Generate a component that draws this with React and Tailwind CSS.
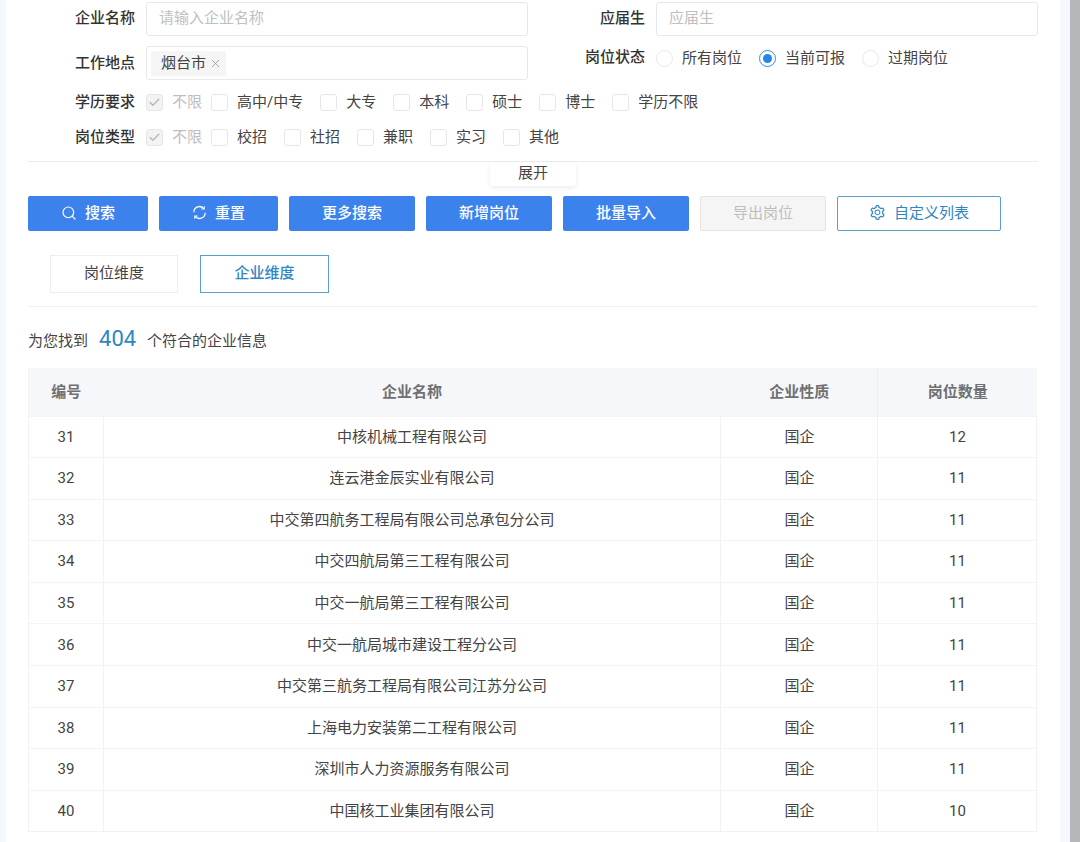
import React from "react";
import { Search, Check, X } from "lucide-react";
import { AiOutlineSetting } from "react-icons/ai";

function SyncIcon() {
  return (
    <svg width="15" height="15" viewBox="0 0 16 16" fill="none" stroke="currentColor" strokeWidth="1.4" strokeLinecap="round">
      <path d="M2 7.2A6 6 0 0 1 12.4 3.6" />
      <path d="M14 8.8A6 6 0 0 1 3.6 12.4" />
      <path d="M13 1.6v2.6h-2.6" strokeWidth="1.1" />
      <path d="M3 14.4v-2.6h2.6" strokeWidth="1.1" />
    </svg>
  );
}

function Box({ checked, disabled }) {
  return (
    <span className={`flex h-[17px] w-[17px] shrink-0 items-center justify-center rounded-[3px] border border-[#e4e6ea] ${disabled ? "bg-[#f3f3f3]" : "bg-white"}`}>
      {checked && <Check size={13} strokeWidth={2.6} className="text-[#b8b8b8]" />}
    </span>
  );
}

function CheckItem({ label, checked, disabled, className = "" }) {
  return (
    <span className={`flex items-center gap-[9px] ${className}`}>
      <Box checked={checked} disabled={disabled} />
      <span className={disabled ? "text-[#bdbdbd]" : "text-[#444]"}>{label}</span>
    </span>
  );
}

function Radio({ label, on }) {
  return (
    <span className="flex items-center gap-[9px]">
      <span className={`flex h-[17px] w-[17px] items-center justify-center rounded-full border ${on ? "border-[#2f8fe8]" : "border-[#e6e8ec]"}`}>
        {on && <span className="h-[9px] w-[9px] rounded-full bg-[#2486e8]" />}
      </span>
      <span className="text-[#444]">{label}</span>
    </span>
  );
}

function Label({ children, className = "pb-px" }) {
  return <span className={`w-[107px] shrink-0 text-right font-medium text-[#333] ${className}`}>{children}</span>;
}

function Btn({ children, w, kind = "primary" }) {
  const styles = {
    primary: "bg-[#3b82ec] text-white font-medium",
    disabled: "border border-[#e4e4e4] bg-[#f5f5f5] text-[#bdbdbd]",
    outline: "border border-[#5a9fcb] bg-white text-[#2f86c4]",
  };
  return (
    <button className={`flex h-[35px] items-center justify-center gap-[8px] rounded-[2px] pb-[2px] ${w} ${styles[kind]}`}>
      {children}
    </button>
  );
}

const rows = [
  ["31", "中核机械工程有限公司", "12"],
  ["32", "连云港金辰实业有限公司", "11"],
  ["33", "中交第四航务工程局有限公司总承包分公司", "11"],
  ["34", "中交四航局第三工程有限公司", "11"],
  ["35", "中交一航局第三工程有限公司", "11"],
  ["36", "中交一航局城市建设工程分公司", "11"],
  ["37", "中交第三航务工程局有限公司江苏分公司", "11"],
  ["38", "上海电力安装第二工程有限公司", "11"],
  ["39", "深圳市人力资源服务有限公司", "11"],
  ["40", "中国核工业集团有限公司", "10"],
];

export default function App() {
  return (
    <div className="flex h-[842px] w-[1080px] overflow-hidden bg-[#f4f8ff] pl-[6px] font-['Roboto','Noto_Sans_CJK_SC',sans-serif] text-[15px] leading-[20px] text-[#444]">
      <main className="flex w-[1054px] flex-col bg-white pl-[22px] pr-[22px] pt-[2px]">
        <div className="grid grid-cols-[500px_500px] gap-x-[10px] gap-y-[10px]">
          <div className="flex items-center gap-[11px]">
            <Label className="pb-[3px]">企业名称</Label>
            <div className="flex h-[34px] flex-1 items-center rounded-[3px] border border-[#e6e8ec] pb-[3px] pl-[12px] text-[#c0c0c0]">请输入企业名称</div>
          </div>
          <div className="flex items-center gap-[11px]">
            <Label className="pb-[3px]">应届生</Label>
            <div className="flex h-[34px] flex-1 items-center rounded-[3px] border border-[#e6e8ec] pb-[3px] pl-[12px] text-[#c0c0c0]">应届生</div>
          </div>
          <div className="flex items-center gap-[11px]">
            <Label>工作地点</Label>
            <div className="flex h-[34px] flex-1 items-center rounded-[3px] border border-[#e6e8ec] pl-[4px]">
              <span className="flex h-[25px] w-[75px] items-center gap-[3px] rounded-[2px] bg-[#f5f5f5] pb-px pl-[10px] text-[#444]">
                烟台市
                <X size={13} strokeWidth={1.3} className="mt-px text-[#888]" />
              </span>
            </div>
          </div>
          <div className="-mt-px flex h-[24px] items-center gap-[11px]">
            <Label>岗位状态</Label>
            <div className="flex flex-1 items-center gap-[17px] pt-[2px]">
              <Radio label="所有岗位" />
              <Radio label="当前可报" on />
              <Radio label="过期岗位" />
            </div>
          </div>
        </div>

        <div className="mt-[12px] flex h-[20px] items-center gap-[11px]">
          <Label>学历要求</Label>
          <div className="flex items-center">
            <CheckItem label="不限" checked disabled className="mr-[9px]" />
            <CheckItem label="高中/中专" className="mr-[17px]" />
            <CheckItem label="大专" className="mr-[17px]" />
            <CheckItem label="本科" className="mr-[17px]" />
            <CheckItem label="硕士" className="mr-[17px]" />
            <CheckItem label="博士" className="mr-[17px]" />
            <CheckItem label="学历不限" />
          </div>
        </div>
        <div className="mt-[15px] flex h-[20px] items-center gap-[11px]">
          <Label>岗位类型</Label>
          <div className="flex items-center">
            <CheckItem label="不限" checked disabled className="mr-[9px]" />
            <CheckItem label="校招" className="mr-[17px]" />
            <CheckItem label="社招" className="mr-[17px]" />
            <CheckItem label="兼职" className="mr-[17px]" />
            <CheckItem label="实习" className="mr-[17px]" />
            <CheckItem label="其他" />
          </div>
        </div>

        <div className="mt-[14px] h-px w-[1010px] bg-[#ececec]" />
        <div className="flex justify-center">
          <div className="flex h-[24px] w-[86px] items-center justify-center rounded-b-[4px] bg-white pb-[3px] text-[#444] shadow-[0_2px_5px_rgba(0,0,0,0.08)]">展开</div>
        </div>

        <div className="mt-[10px] flex gap-[11px]">
          <Btn w="w-[120px]"><Search size={16} strokeWidth={1.8} />搜索</Btn>
          <Btn w="w-[119px]"><SyncIcon />重置</Btn>
          <Btn w="w-[126px]">更多搜索</Btn>
          <Btn w="w-[126px]">新增岗位</Btn>
          <Btn w="w-[126px]">批量导入</Btn>
          <Btn w="w-[126px]" kind="disabled">导出岗位</Btn>
          <Btn w="w-[164px]" kind="outline"><AiOutlineSetting size={17} />自定义列表</Btn>
        </div>

        <div className="ml-[22px] mt-[24px] flex gap-[22px]">
          <button className="h-[38px] w-[128px] border border-[#eeeeee] bg-white pb-[2px] text-[#444]">岗位维度</button>
          <button className="h-[38px] w-[129px] border border-[#5a9fcb] bg-white pb-[2px] font-medium text-[#2f86c4]">企业维度</button>
        </div>

        <div className="mt-[13px] h-px w-[1010px] bg-[#f0f0f0]" />

        <div className="mt-[20px] flex h-[28px] items-center">
          <span className="mr-[11px]">为您找到</span>
          <span className="mr-[11px] pb-[4px] text-[22px] text-[#2f86c4]">404</span>
          <span>个符合的企业信息</span>
        </div>

        <table className="mt-[13px] w-[1008px] table-fixed border-collapse border-b border-l border-[#f2f2f4] text-center">
          <colgroup>
            <col className="w-[75px]" />
            <col className="w-[617px]" />
            <col className="w-[157px]" />
            <col className="w-[159px]" />
          </colgroup>
          <thead>
            <tr className="h-[48px] bg-[#f6f7fb] text-[#707070]">
              <th className="font-semibold">编号</th>
              <th className="font-semibold">企业名称</th>
              <th className="pl-px font-semibold">企业性质</th>
              <th className="border-l border-[#eeeff3] pl-px font-semibold">岗位数量</th>
            </tr>
          </thead>
          <tbody>
            {rows.map((r) => (
              <tr key={r[0]} className="h-[41.6px] border-t border-[#f4f4f6]">
                <td className="border-r border-[#f2f2f4] pb-[0.4px]">{r[0]}</td>
                <td className="border-r border-[#f2f2f4] pb-[0.4px]">{r[1]}</td>
                <td className="border-r border-[#f2f2f4] pb-[0.4px] pl-px">国企</td>
                <td className="border-r border-[#f2f2f4] pb-[0.4px] pl-px">{r[2]}</td>
              </tr>
            ))}
          </tbody>
        </table>
      </main>
      <div className="w-[10px]" />
      <div className="h-full w-[10px] bg-[#b5b7bb]" />
    </div>
  );
}
